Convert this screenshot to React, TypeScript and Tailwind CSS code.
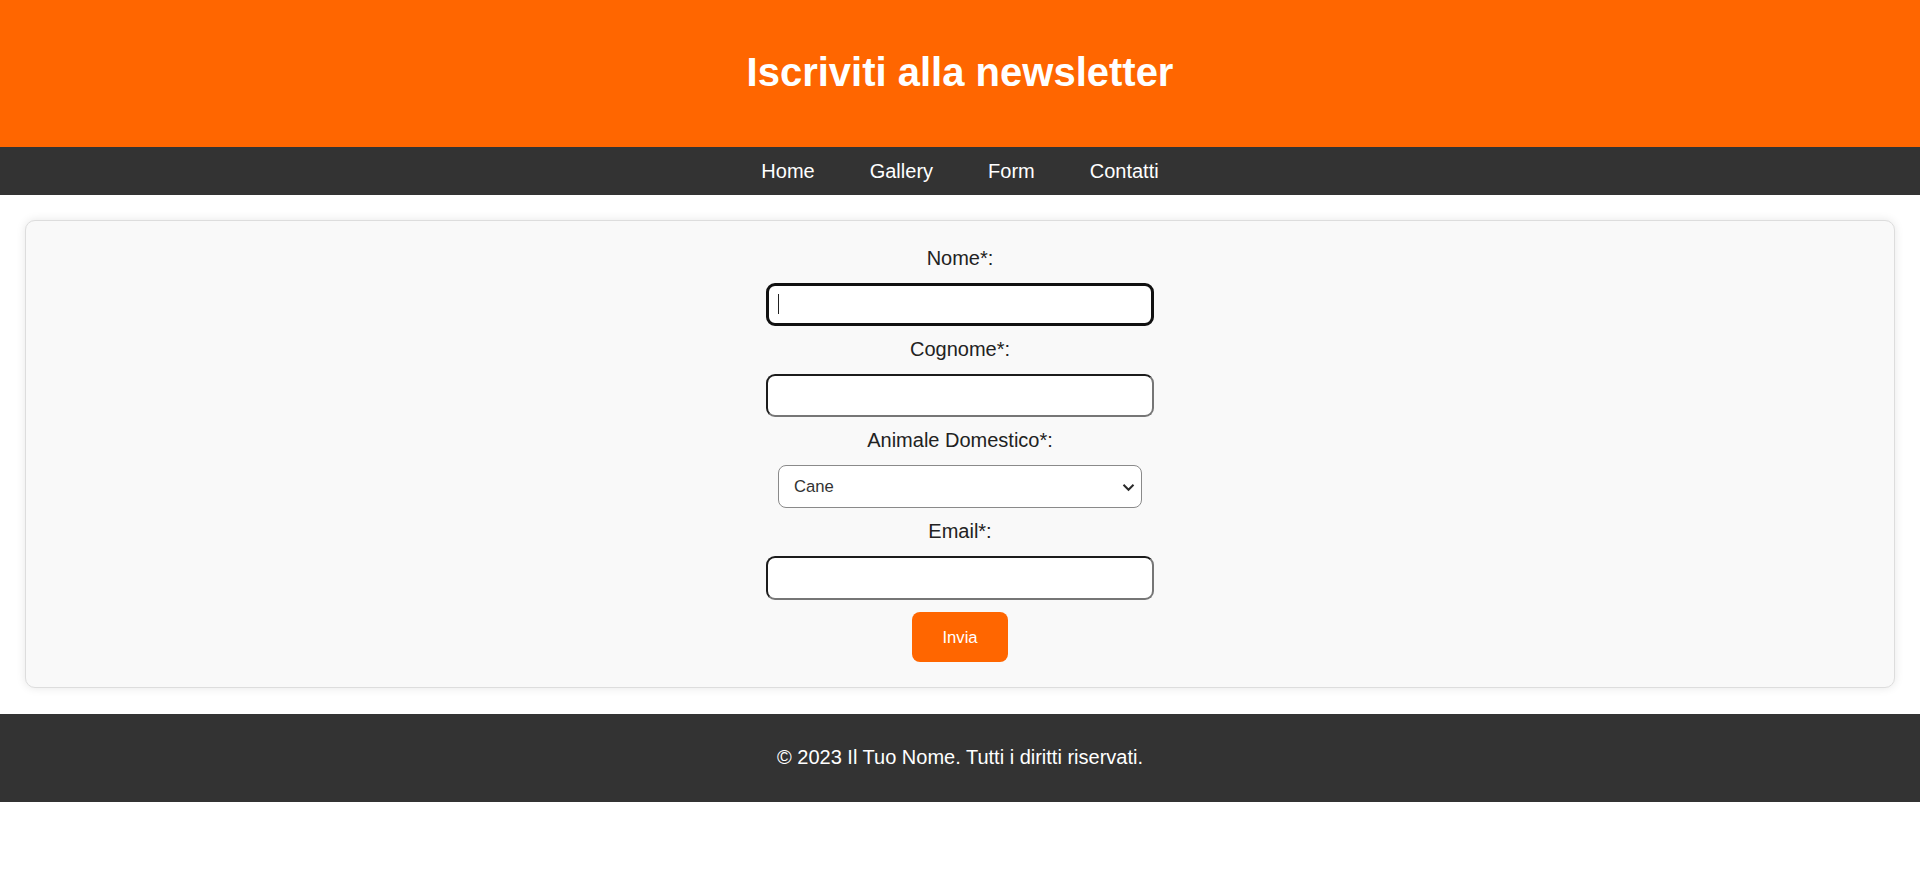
import React from "react";

export default function App() {
  const inputCls =
    "block w-[388px] h-[43px] rounded-[9px] bg-white border-solid border-[2px] border-t-[#1c1c1c] border-l-[#1c1c1c] border-b-[#767676] border-r-[#767676] px-[10px] text-[20px] outline-none";
  const labelCls = "block text-[20px] leading-[23px] text-[#222]";
  return (
    <div
      className="min-h-[881px] bg-white"
      style={{ fontFamily: '"Liberation Sans", Arial, sans-serif' }}
    >
      <header className="h-[147px] bg-[#ff6600] flex items-center justify-center">
        <h1 className="text-[40px] leading-[46px] font-bold text-white -mt-[3px]">
          Iscriviti alla newsletter
        </h1>
      </header>
      <nav className="h-[48px] bg-[#333333] flex items-center justify-center gap-[55px]">
        {["Home", "Gallery", "Form", "Contatti"].map((t) => (
          <a key={t} href="#" className="text-white text-[20px] leading-[23px]">
            {t}
          </a>
        ))}
      </nav>
      <main className="px-[25px] pt-[25px] pb-[26px]">
        <form
          className="flex flex-col items-center gap-[12.5px] pt-[26px] pb-[25px] border border-[#dddddd] rounded-[10px] bg-[#f9f9f9] shadow-[0_0_10px_rgba(0,0,0,0.1)]"
          onSubmit={(e) => e.preventDefault()}
        >
          <label className={labelCls}>Nome*:</label>
          <div className="relative">
            <input
              type="text"
              className="block w-[388px] h-[43px] rounded-[9px] bg-white border-solid border-[3px] border-[#111111] px-[10px] text-[20px] outline-none"
            />
            <span className="absolute left-[12px] top-[11px] w-[1px] h-[20px] bg-[#222]" />
          </div>
          <label className={labelCls}>Cognome*:</label>
          <input type="text" className={inputCls} />
          <label className={labelCls}>Animale Domestico*:</label>
          <div className="relative">
            <select className="block appearance-none w-[364px] h-[43px] rounded-[8px] bg-white border border-solid border-[#8a8a8a] pl-[15px] pr-[30px] text-[16.67px] text-[#333] outline-none">
              <option>Cane</option>
              <option>Gatto</option>
              <option>Altro</option>
            </select>
            <svg
              className="absolute right-[7px] top-[18px] pointer-events-none"
              width="13"
              height="9"
              viewBox="0 0 13 9"
            >
              <path
                d="M1.5 1.8 L6.5 6.8 L11.5 1.8"
                fill="none"
                stroke="#2a2a2a"
                strokeWidth="2"
              />
            </svg>
          </div>
          <label className={labelCls}>Email*:</label>
          <input
            type="email"
            className="block w-[388px] h-[44px] rounded-[9px] bg-white border-solid border-[2px] border-t-[#1c1c1c] border-l-[#1c1c1c] border-b-[#767676] border-r-[#767676] px-[10px] text-[20px] outline-none"
          />
          <button
            type="submit"
            className="w-[96px] h-[50px] rounded-[8px] bg-[#ff6600] text-white text-[16.67px]"
          >
            Invia
          </button>
        </form>
      </main>
      <footer className="h-[88px] bg-[#333333] flex items-center justify-center">
        <p className="text-white text-[20px] leading-[23px] -mt-[2px]">
          © 2023 Il Tuo Nome. Tutti i diritti riservati.
        </p>
      </footer>
    </div>
  );
}
